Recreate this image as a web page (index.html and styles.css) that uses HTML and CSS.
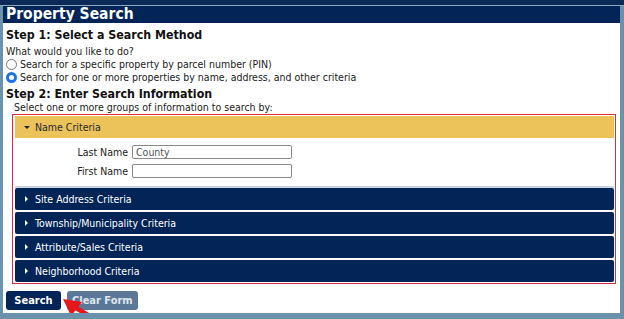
FILE: index.html
```html
<!DOCTYPE html>
<html lang="en">
<head>
	<meta charset="UTF-8">
	<title>Property Search</title>
	<link rel="stylesheet" href="styles.css">
</head>
<body>
	<div class="topbar"></div>
	<main class="window">
		<h1 class="title">Property Search</h1>

		<section class="content">
			<h2>Step 1: Select a Search Method</h2>
			<p class="ask">What would you like to do?</p>
			<label class="choice"><span class="radio"></span>Search for a specific property by parcel number (PIN)</label>
			<label class="choice"><span class="radio on"></span>Search for one or more properties by name, address, and other criteria</label>

			<h2 class="step2">Step 2: Enter Search Information</h2>
			<p class="hint">Select one or more groups of information to search by:</p>

			<div class="groups">
				<div class="bar open"><span class="caret down"></span>Name Criteria</div>
				<div class="fields">
					<div class="row">
						<span class="label">Last Name</span>
						<span class="input">County</span>
					</div>
					<div class="row">
						<span class="label">First Name</span>
						<span class="input"></span>
					</div>
				</div>
				<div class="bar"><span class="caret"></span>Site Address Criteria</div>
				<div class="bar"><span class="caret"></span>Township/Municipality Criteria</div>
				<div class="bar"><span class="caret"></span>Attribute/Sales Criteria</div>
				<div class="bar"><span class="caret"></span>Neighborhood Criteria</div>
			</div>

			<div class="buttons">
				<button class="btn primary">Search</button>
				<button class="btn">Clear Form</button>
			</div>
		</section>

		<svg class="arrow" width="46" height="26" viewBox="0 0 46 26">
			<line x1="42" y1="28" x2="12" y2="11" stroke="#e8161b" stroke-width="4.5"/>
			<polygon points="1,3 20,6 9,20" fill="#e8161b"/>
		</svg>
	</main>
</body>
</html>
```

FILE: styles.css
```css
body {
  margin: 0;
  background: #6a92ab;
  font-family: "DejaVu Sans Condensed", "DejaVu Sans", sans-serif;
  font-size: 10.5px;
  color: #222;
}

.topbar {
  height: 5px;
  background: #0b2a58;
  border-bottom: 1px solid #8fa9c2;
}

.window {
  position: relative;
  margin: 0 4px 0 3px;
  height: 307px;
  background: #fff;
}

.title {
  margin: 0;
  height: 17px;
  line-height: 17px;
  padding: 0 3px;
  background: #022457;
  color: #fff;
  font-size: 15.5px;
}

.content {
  padding: 0 3px;
}

h2 {
  margin: 5px 0 0 0;
  font-size: 12.3px;
  line-height: 15px;
  color: #111;
}

.ask {
  margin: 2px 0 0 0;
  line-height: 13px;
}

.choice {
  display: flex;
  align-items: center;
  gap: 3px;
  line-height: 13px;
}

.radio {
  box-sizing: border-box;
  width: 11px;
  height: 11px;
  border: 1px solid #777;
  border-radius: 50%;
  background: #fff;
}

.radio.on {
  border: 3px solid #1a73e8;
}

.step2 {
  margin-top: 3px;
}

.hint {
  margin: 0 0 0 8px;
  line-height: 11px;
}

.groups {
  margin: 1px 1px 0 6px;
  border: 1px solid #d2303c;
  padding: 1px 1px 1px 2px;
  display: flex;
  flex-direction: column;
  gap: 2px;
}

.bar {
  height: 22px;
  padding-left: 10px;
  background: #022457;
  color: #fff;
  border-radius: 2px;
  display: flex;
  align-items: center;
}

.bar.open {
  background: #ecc25a;
  color: #2a2a2a;
  border-radius: 0;
}

.caret {
  width: 0;
  height: 0;
  margin-right: 7px;
  border-top: 3px solid transparent;
  border-bottom: 3px solid transparent;
  border-left: 3px solid #fff;
}

.caret.down {
  border-left: 3px solid transparent;
  border-right: 3px solid transparent;
  border-top: 3px solid #222;
  border-bottom: 0;
  margin-left: -1px;
  margin-right: 5px;
}

.fields {
  padding: 7px 0 8px 0;
  border-bottom: 2px solid #c9d6e2;
  display: flex;
  flex-direction: column;
  gap: 5px;
  margin-top: -2px;
  margin-bottom: -2px;
}

.row {
  display: flex;
  align-items: center;
  gap: 4px;
}

.label {
  width: 113px;
  text-align: right;
}

.input {
  box-sizing: border-box;
  width: 160px;
  height: 14px;
  line-height: 12px;
  padding-left: 3px;
  border: 1px solid #8a8a8a;
  border-radius: 2px;
  color: #555;
}

.buttons {
  display: flex;
  gap: 6px;
  margin-top: 7px;
}

.btn {
  height: 19px;
  padding: 0 5px;
  border: 0;
  border-radius: 3px;
  background: #5c7899;
  color: #dfe6ee;
  font-family: "DejaVu Sans Condensed", "DejaVu Sans", sans-serif;
  font-size: 11px;
  font-weight: bold;
}

.btn.primary {
  width: 55px;
  background: #022457;
  color: #fff;
}

.arrow {
  position: absolute;
  left: 59px;
  top: 290px;
}
```
